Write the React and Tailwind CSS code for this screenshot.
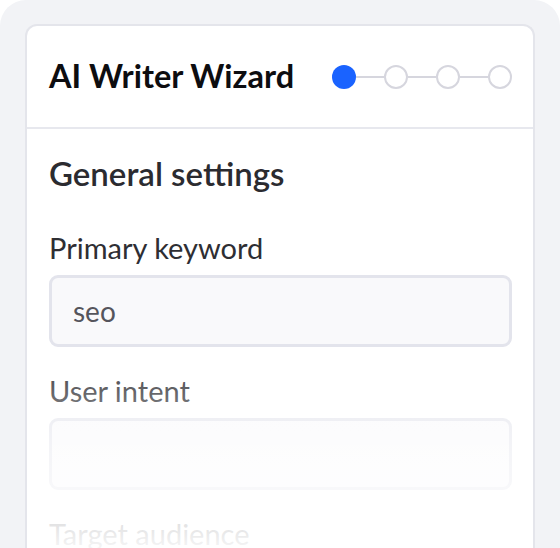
import React from 'react'

const STEPS = [true, false, false, false]

function Stepper() {
  return (
    <div className="flex items-center">
      {STEPS.map((done, i) => (
        <div key={i} className="flex items-center">
          {i > 0 && <div className="w-[28px] h-[2px] bg-[#d6d6de]" />}
          {done ? (
            <div className="w-[24px] h-[24px] rounded-full bg-[#1a63ff]" />
          ) : (
            <div className="w-[24px] h-[24px] rounded-full border-2 border-[#d6d6de] bg-white" />
          )}
        </div>
      ))}
    </div>
  )
}

function Field({ label, value }) {
  return (
    <div className="flex flex-col">
      <label className="text-[29px] leading-[32px] text-[#2e2e33]">{label}</label>
      <div className="mt-[11px] h-[72px] rounded-[9px] border-[3px] border-[#e3e4ec] bg-[#f9f9fb] flex items-center px-[21px] text-[28px] text-[#55555c]">
        {value}
      </div>
    </div>
  )
}

export default function App() {
  return (
    <div className="w-[560px] h-[548px] bg-white overflow-hidden" style={{ fontFamily: 'Lato, "Noto Sans", sans-serif' }}>
      <div className="w-full h-full bg-[#f2f3f6] rounded-t-[26px] pt-[24px] px-[25px]">
        <div className="relative h-[524px] overflow-hidden bg-white border-2 border-b-0 border-[#e4e5eb] rounded-t-[12px]">
          {/* header */}
          <div className="h-[103px] flex items-center justify-between pl-[22px] pr-[21px] border-b-2 border-[#e7e8ee]">
            <h1 className="text-[32.5px] font-bold text-[#0d0d10]">AI Writer Wizard</h1>
            <Stepper />
          </div>

          {/* body */}
          <div className="pl-[22px] pr-[21px] pt-[25px] flex flex-col">
            <h2 className="text-[33px] leading-[38px] font-semibold text-[#2b2b30]">General settings</h2>
            <div className="mt-[40px] flex flex-col gap-[28px]">
              <Field label="Primary keyword" value="seo" />
              <Field label="User intent" value="" />
              <Field label="Target audience" value="" />
            </div>
          </div>

          {/* fade over the lower part */}
          <div className="absolute left-0 right-0 bottom-0 h-[200px] bg-gradient-to-b from-white/0 via-white/60 to-white/95" />
        </div>
      </div>
    </div>
  )
}
